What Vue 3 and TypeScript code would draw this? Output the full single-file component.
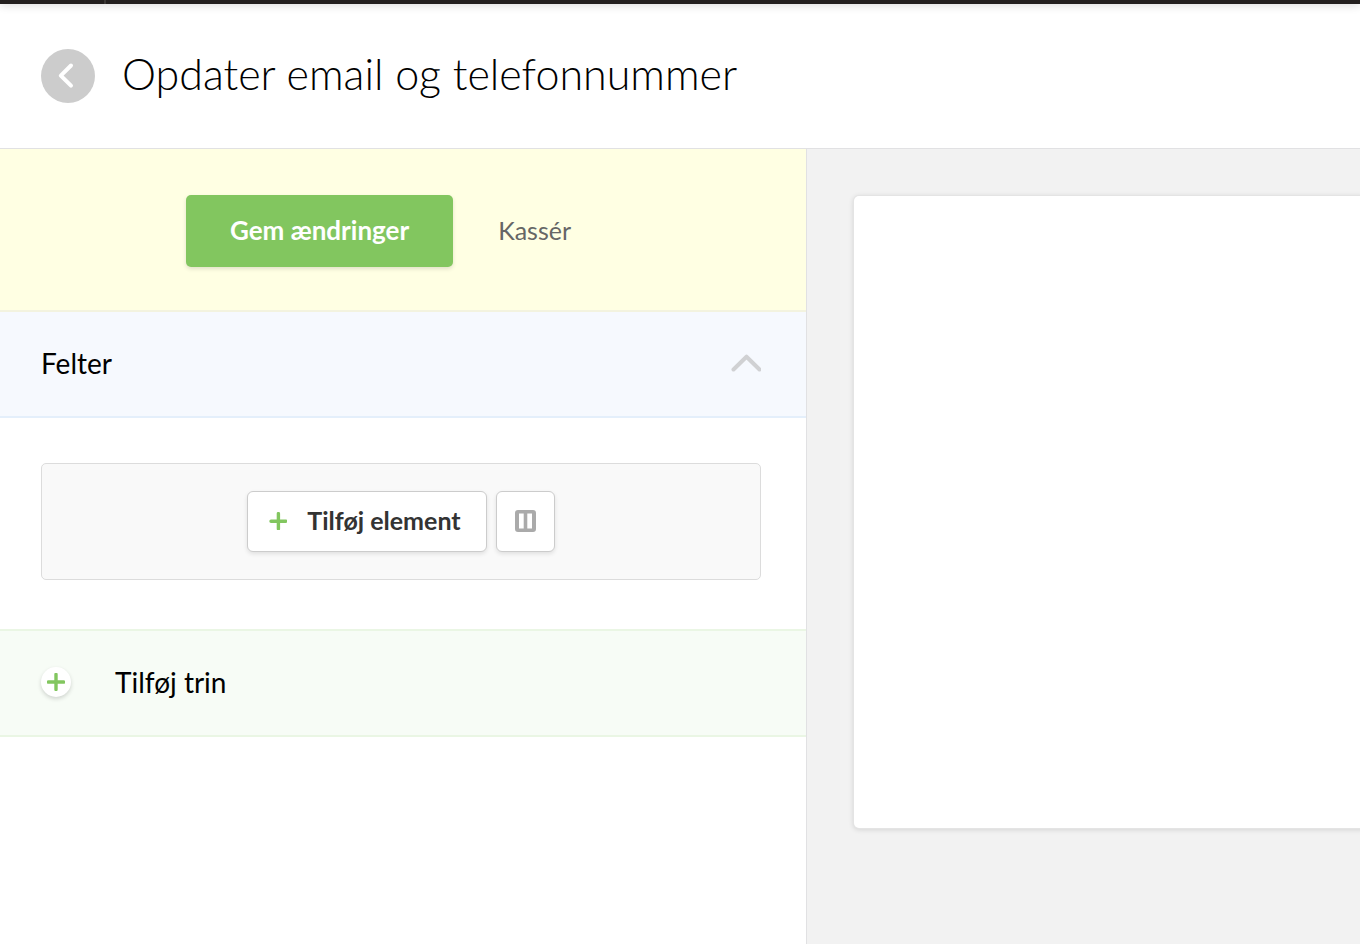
<script setup lang="ts">
import { ref } from 'vue'

const title = 'Opdater email og telefonnummer'
const open = ref(true)
</script>

<template>
  <div class="app">
    <div class="topbar"></div>
    <header class="header">
      <button class="back" type="button" aria-label="Tilbage">
        <svg width="54" height="54" viewBox="0 0 54 54" aria-hidden="true">
          <path d="M30 16.5 19.8 26.6 30 36.7" />
        </svg>
      </button>
      <h1 class="title">{{ title }}</h1>
    </header>
    <main class="main">
      <section class="editor">
        <div class="savebar">
          <button class="save" type="button">Gem ændringer</button>
          <button class="discard" type="button">Kassér</button>
        </div>
        <button class="step" type="button" :aria-expanded="open" @click="open = !open">
          <span>Felter</span>
          <svg class="chevron" :class="{ closed: !open }" width="30" height="18" viewBox="0 0 30 18" aria-hidden="true">
            <path d="M2.5 15.5 15.5 2.7 28.5 15.5" />
          </svg>
        </button>
        <div v-if="open" class="fields">
          <div class="dropzone">
            <button class="tool add" type="button">
              <svg class="plus" width="18" height="18" viewBox="0 0 18 18" aria-hidden="true">
                <path d="M9.4 1.6V16.8M2 9.2H16.8" />
              </svg>
              <span class="tool-label">Tilføj element</span>
            </button>
            <button class="tool columns" type="button" aria-label="Tilføj kolonner">
              <svg width="21" height="22" viewBox="0 0 21 22" aria-hidden="true">
                <path
                  fill="#aaa"
                  fill-rule="evenodd"
                  d="M3 0H18Q21 0 21 3V19Q21 22 18 22H3Q0 22 0 19V3Q0 0 3 0ZM4 3.4V18.6H8.7V3.4ZM12.3 3.4V18.6H17V3.4Z"
                />
              </svg>
            </button>
          </div>
        </div>
        <button class="step new-step" type="button">
          <span class="bullet">
            <svg class="plus" width="18" height="18" viewBox="0 0 18 18" aria-hidden="true">
              <path d="M9 1.4V16.6M1.4 9H16.6" />
            </svg>
          </span>
          <span>Tilføj trin</span>
        </button>
      </section>
      <section class="preview">
        <div class="sheet"></div>
      </section>
    </main>
  </div>
</template>

<style>
body {
  margin: 0;
  background: #fff;
}
</style>

<style scoped>
.app {
  display: flex;
  flex-direction: column;
  min-height: 100vh;
  font-family: Lato, "Open Sans", sans-serif;
  color: #000;
  background: #fff;
  overflow: hidden;
}
button {
  font: inherit;
  color: inherit;
  margin: 0;
  padding: 0;
  border: 0;
  background: none;
  cursor: pointer;
}
svg {
  display: block;
  fill: none;
  stroke-linecap: round;
  stroke-linejoin: round;
}
.topbar {
  height: 4px;
  background: linear-gradient(90deg, transparent 104px, #3a3735 104px, #3a3735 106px, transparent 106px) #231f1e;
  box-shadow: 0 0 10px rgba(0, 0, 0, 0.28);
}
.header {
  display: flex;
  align-items: center;
  gap: 27px;
  padding: 45px 41px;
  border-bottom: 1px solid #e1e1e3;
}
.back {
  flex: none;
  border-radius: 50%;
  background: #ccc;
}
.back path {
  stroke: #fff;
  stroke-width: 4;
}
.title {
  margin: 0;
  padding-bottom: 4px;
  font-size: 43px;
  line-height: 50px;
  font-weight: 300;
}
.main {
  flex: 1;
  display: grid;
  grid-template-columns: minmax(0, 807fr) minmax(0, 553fr);
}
.editor {
  border-right: 1px solid #e1e1e3;
}
.savebar {
  display: flex;
  justify-content: center;
  padding: 46px 4px 43px 0;
  background: #ffffe3;
  border-bottom: 2px solid #f3f3df;
  font-size: 25px;
  line-height: 70px;
}
.save {
  padding: 0 44px 2px;
  border-radius: 5px;
  background: #82c65f;
  color: #fff;
  font-size: 26px;
  font-weight: 700;
  box-shadow: 0 2px 4px rgba(0, 0, 0, 0.12);
}
.discard {
  padding: 0 45px 2px;
  color: #666;
}
.step {
  display: flex;
  align-items: center;
  justify-content: space-between;
  width: 100%;
  padding: 33px 45px 35px 41px;
  background: #f6f9fe;
  border-bottom: 2px solid #e4effb;
  font-size: 28px;
  line-height: 36px;
  text-align: left;
}
.chevron path {
  stroke: #d0d1d3;
  stroke-width: 4;
}
.closed {
  transform: rotate(180deg);
}
.fields {
  padding: 45px 45px 49px 41px;
}
.dropzone {
  display: flex;
  justify-content: center;
  gap: 9px;
  padding: 27px;
  border: 1px solid #dcdcdc;
  border-radius: 5px;
  background: #f9f9f9;
}
.tool {
  display: flex;
  align-items: center;
  height: 61px;
  border: 1px solid #ccc;
  border-radius: 6px;
  background: #fff;
  box-shadow: 0 2px 4px rgba(0, 0, 0, 0.1);
}
.add {
  gap: 20px;
  padding: 0 25px 2px 21px;
  font-size: 25px;
  font-weight: 700;
  color: #333;
}
.tool-label {
  padding-bottom: 2px;
}
.columns {
  padding: 0 18px 2px;
}
.plus path {
  stroke: #82c65f;
  stroke-width: 3.4;
}
.new-step {
  justify-content: flex-start;
  gap: 44px;
  background: #f7fcf6;
  border-top: 2px solid #eaf6e4;
  border-bottom: 2px solid #eaf6e4;
}
.bullet {
  padding: 6px;
  border-radius: 50%;
  background: #fff;
  box-shadow: 0 2px 4px rgba(0, 0, 0, 0.16);
}
.preview {
  padding: 47px 0 47px 47px;
  background: #f2f2f2;
}
.sheet {
  height: 632px;
  margin-right: -8px;
  border-radius: 5px;
  background: #fff;
  box-shadow: 0 0 0 1px #e4e4e4, 0 1px 5px 1px rgba(0, 0, 0, 0.12);
}
</style>
